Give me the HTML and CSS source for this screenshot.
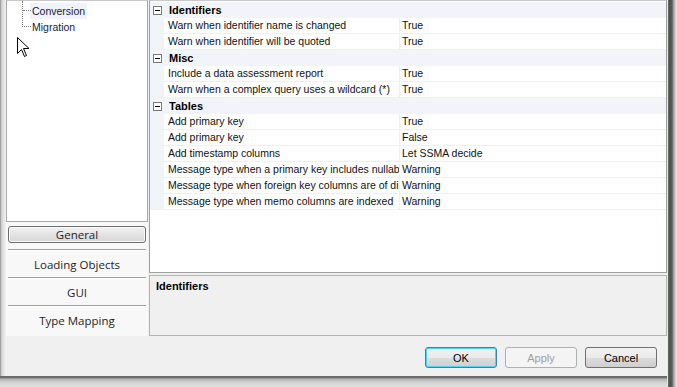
FILE: index.html
```html
<!DOCTYPE html>
<html>
<head>
<meta charset="utf-8">
<link rel="stylesheet" href="styles.css">
</head>
<body>
<div class="window">
  <div class="frame-left"></div>
  <div class="client">
    <div class="main">
      <div class="left">
        <div class="tree">
          <div class="tree-lines"></div>
          <div class="tree-item hot">Conversion</div>
          <div class="tree-item">Migration</div>
        </div>
        <div class="nav">
          <div class="nav-item selected">General</div>
          <div class="nav-sep"></div>
          <div class="nav-item">Loading Objects</div>
          <div class="nav-sep"></div>
          <div class="nav-item">GUI</div>
          <div class="nav-sep"></div>
          <div class="nav-item">Type Mapping</div>
        </div>
      </div>
      <div class="right">
        <div class="grid">
          <div class="cat"><span class="box"></span><span class="cat-name">Identifiers</span></div>
          <div class="row"><span class="name">Warn when identifier name is changed</span><span class="val">True</span></div>
          <div class="row"><span class="name">Warn when identifier will be quoted</span><span class="val">True</span></div>
          <div class="cat"><span class="box"></span><span class="cat-name">Misc</span></div>
          <div class="row"><span class="name">Include a data assessment report</span><span class="val">True</span></div>
          <div class="row"><span class="name">Warn when a complex query uses a wildcard (*)</span><span class="val">True</span></div>
          <div class="cat"><span class="box"></span><span class="cat-name">Tables</span></div>
          <div class="row"><span class="name">Add primary key</span><span class="val">True</span></div>
          <div class="row"><span class="name">Add primary key</span><span class="val">False</span></div>
          <div class="row"><span class="name">Add timestamp columns</span><span class="val">Let SSMA decide</span></div>
          <div class="row"><span class="name">Message type when a primary key includes nullab</span><span class="val">Warning</span></div>
          <div class="row"><span class="name">Message type when foreign key columns are of di</span><span class="val">Warning</span></div>
          <div class="row"><span class="name">Message type when memo columns are indexed</span><span class="val">Warning</span></div>
          <div class="filler"></div>
        </div>
        <div class="desc">
          <div class="desc-title">Identifiers</div>
        </div>
      </div>
    </div>
    <div class="footer">
      <button class="btn default">OK</button>
      <button class="btn disabled">Apply</button>
      <button class="btn">Cancel</button>
    </div>
    <div class="frame-bottom"></div>
  </div>
  <div class="frame-right"></div>
  <svg class="cursor" width="13" height="21" viewBox="0 0 13 21"><path d="M0.5 0.5 L0.5 16.5 L4.5 12.5 L7.5 19.5 L9.5 18.5 L6.5 11.5 L12 11.5 Z" fill="#fff" stroke="#000" stroke-width="1"/></svg>
</div>
</body>
</html>
```

FILE: styles.css
```css
* { box-sizing: border-box; }
html, body { margin: 0; padding: 0; }
body {
  width: 677px;
  height: 387px;
  overflow: hidden;
  background: #f0f0f0;
  font-family: "Liberation Sans", Arial, sans-serif;
  font-size: 11px;
  color: #000;
}
.window {
  position: relative;
  display: flex;
  width: 677px;
  height: 387px;
}
.frame-left {
  width: 6px;
  background: linear-gradient(to right, #8c8c8c 0, #bcbcbc 1px, #d8d8d8 2px, #e6e6e6 4px, #f0f0f0 6px);
}
.frame-right {
  width: 10px;
  background: linear-gradient(to right, #e6e6e6 0, #e6e6e6 1px, #6b706b 1px, #4a4f4a 3px, #5a605a 5px, #8a8a8a 6px, #c8c8c8 8px, #e8e8e8 10px);
}
.client {
  flex: 1;
  display: flex;
  flex-direction: column;
}
.main {
  display: flex;
  height: 336px;
}
.left {
  width: 142px;
  display: flex;
  flex-direction: column;
}
.tree {
  position: relative;
  height: 222px;
  background: #fff;
  border: 1px solid #a8a8a8;
  border-top-color: #c8c8c8;
  padding-top: 2px;
  padding-left: 23px;
}
.tree-lines {
  position: absolute;
  left: 15px;
  top: 0;
  width: 9px;
  height: 26px;
  border-left: 1px dotted #808080;
  border-bottom: 1px dotted #808080;
}
.tree-lines::after {
  content: "";
  position: absolute;
  left: 0;
  top: 9px;
  width: 8px;
  border-top: 1px dotted #808080;
}
.tree-item {
  height: 16px;
  line-height: 16px;
  padding: 0 2px;
  color: #1a1a3a;
  font-size: 10.5px;
  display: table;
}
.tree-item.hot {
  background: #f0f3f9;
}
.nav {
  flex: 1;
  background: #f8f8f8;
  padding: 4px 2px 0 2px;
  font-family: "Open Sans", "Liberation Sans", sans-serif;
  font-size: 11.5px;
  color: #1e1e1e;
}
.nav-item {
  height: 26px;
  line-height: 27px;
  text-align: center;
}
.nav-item.selected {
  height: 17px;
  line-height: 15px;
  border: 1px solid #6e6e6e;
  border-radius: 3px;
  background: linear-gradient(to bottom, #f2f2f2 0, #e4e4e4 50%, #d6d6d6 100%);
  box-shadow: inset 0 0 0 1px #fafafa;
  margin-bottom: 6px;
}
.nav-sep {
  height: 2px;
  border-top: 1px solid #a0a0a0;
  border-bottom: 1px solid #fff;
}
.right {
  flex: 1;
  display: flex;
  flex-direction: column;
  margin-left: 1px;
}
.grid {
  height: 273px;
  background: #fff;
  border: 1px solid #a0a0a0;
  border-top-color: #c8c8c8;
  padding-top: 1px;
  display: flex;
  flex-direction: column;
  overflow: hidden;
  font-size: 10.5px;
}
.cat, .row {
  height: 16px;
  display: flex;
  align-items: center;
  flex-shrink: 0;
}
.cat {
  background: #f1f4f9;
}
.box {
  width: 9px;
  height: 9px;
  margin-left: 3px;
  margin-right: 7px;
  border: 1px solid #7a7a7a;
  background: #fff;
  position: relative;
}
.box::after {
  content: "";
  position: absolute;
  left: 1px;
  top: 3px;
  width: 5px;
  height: 1px;
  background: #000;
}
.cat-name {
  font-weight: bold;
  font-size: 11px;
}
.row {
  border-left: 14px solid #f1f4f9;
  border-bottom: 1px solid #f0f0f0;
}
.name {
  width: 236px;
  padding-left: 4px;
  white-space: nowrap;
  overflow: hidden;
  height: 15px;
  line-height: 15px;
  border-right: 1px solid #f0f0f0;
  color: #111;
}
.val {
  padding-left: 2px;
  white-space: nowrap;
  height: 15px;
  line-height: 15px;
  color: #111;
}
.filler {
  flex: 1;
}
.desc {
  flex: 1;
  margin-top: 2px;
  border: 1px solid #b4b4b4;
  background: #f0f0f0;
  padding: 4px 6px;
}
.desc-title {
  font-weight: bold;
  font-size: 11px;
}
.footer {
  flex: 1;
  display: flex;
  justify-content: flex-end;
  align-items: flex-start;
  gap: 8px;
  padding-top: 11px;
  padding-right: 10px;
}
.btn {
  width: 72px;
  height: 21px;
  border: 1px solid #707070;
  border-radius: 3px;
  background: linear-gradient(to bottom, #f2f2f2 0, #ebebeb 50%, #dddddd 51%, #cfcfcf 100%);
  font-family: "Liberation Sans", sans-serif;
  font-size: 11px;
  color: #000;
  padding: 0;
}
.btn.default {
  border-color: #3c7fb1;
  box-shadow: inset 0 0 0 1px #48d8fb;
}
.btn.disabled {
  border-color: #adb2b5;
  background: #f4f4f4;
  color: #a0a0a0;
}
.frame-bottom {
  height: 11px;
  background: linear-gradient(to bottom, #7a7a7a 0, #5a5a5a 1px, #b0b0b0 3px, #d0d0d0 6px, #e0e0e0 11px);
  margin-left: -6px;
}
.cursor {
  position: absolute;
  left: 17px;
  top: 37px;
}
```
